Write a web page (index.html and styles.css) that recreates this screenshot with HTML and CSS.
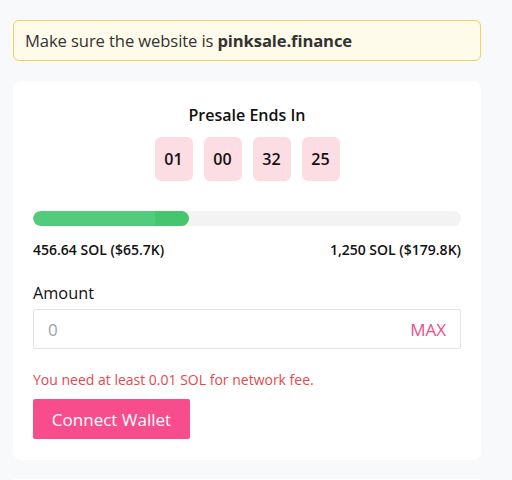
FILE: index.html
```html
<!DOCTYPE html>
<html>
<head>
<meta charset="utf-8">
<link rel="stylesheet" href="styles.css">
</head>
<body>
<div class="page">
  <div class="notice">Make sure the website is <b>pinksale.finance</b></div>
  <div class="card">
    <div class="title">Presale Ends In</div>
    <div class="timer">
      <span class="tbox">01</span>
      <span class="tbox">00</span>
      <span class="tbox">32</span>
      <span class="tbox">25</span>
    </div>
    <div class="progress"><div class="fill" style="width:36.5%"></div></div>
    <div class="amounts">
      <span>456.64 SOL ($65.7K)</span>
      <span>1,250 SOL ($179.8K)</span>
    </div>
    <div class="label">Amount</div>
    <div class="input">
      <span class="placeholder">0</span>
      <span class="max">MAX</span>
    </div>
    <div class="error">You need at least 0.01 SOL for network fee.</div>
    <button class="btn">Connect Wallet</button>
  </div>
  <div class="card2"></div>
</div>
</body>
</html>
```
FILE: styles.css
```css
html, body {
  margin: 0;
  padding: 0;
  background: #f8f9fb;
  font-family: "Open Sans", "Noto Sans", sans-serif;
  color: #1f1f1f;
}
.page {
  padding: 20px 31px 0 13px;
  display: flex;
  flex-direction: column;
}
.notice {
  background: #fffbea;
  border: 1px solid #f3cf5c;
  border-radius: 6px;
  box-sizing: border-box;
  height: 41px;
  padding: 0 11px;
  display: flex;
  align-items: center;
  font-size: 16.6px;
  color: #333;
  letter-spacing: -0.1px;
}
.notice b {
  font-weight: 700;
  margin-left: 4px;
}
.card {
  margin-top: 20px;
  background: #fff;
  border-radius: 8px;
  padding: 23px 20px 21px 20px;
  display: flex;
  flex-direction: column;
}
.title {
  text-align: center;
  font-weight: 600;
  font-size: 16px;
  color: #111;
  line-height: 22px;
}
.timer {
  display: flex;
  justify-content: center;
  gap: 11px;
  margin-top: 11px;
}
.tbox {
  background: #fcdde3;
  border-radius: 6px;
  height: 44px;
  width: 38px;
  display: flex;
  align-items: center;
  justify-content: center;
  font-weight: 600;
  font-size: 16px;
  color: #111;
}
.progress {
  margin-top: 30px;
  height: 15px;
  background: #f3f3f3;
  border-radius: 8px;
  overflow: hidden;
}
.fill {
  height: 100%;
  background: linear-gradient(to right, #52cb7b 78%, #47c46e 78%);
  border-radius: 8px;
}
.amounts {
  display: flex;
  justify-content: space-between;
  margin-top: 14px;
  font-size: 14px;
  font-weight: 600;
  color: #111;
  line-height: 20px;
}
.label {
  margin-top: 22px;
  font-size: 16.3px;
  color: #111;
  line-height: 22px;
}
.input {
  margin-top: 5px;
  height: 40px;
  box-sizing: border-box;
  border: 1px solid #e3e3e3;
  border-radius: 2px;
  display: flex;
  align-items: center;
  justify-content: space-between;
  padding: 0 14px;
  font-size: 17px;
}
.placeholder {
  color: #9aa3ae;
}
.max {
  color: #e9508a;
}
.error {
  margin-top: 21px;
  font-size: 14px;
  color: #e8474c;
  line-height: 20px;
}
.btn {
  margin-top: 9px;
  align-self: flex-start;
  background: #f74d8c;
  border: none;
  border-radius: 2px;
  color: #fff;
  font-family: inherit;
  font-size: 17px;
  width: 157px;
  height: 40px;
  padding: 0;
}
.card2 {
  margin-top: 19px;
  background: #fff;
  border-radius: 8px 8px 0 0;
  height: 1px;
}
```
